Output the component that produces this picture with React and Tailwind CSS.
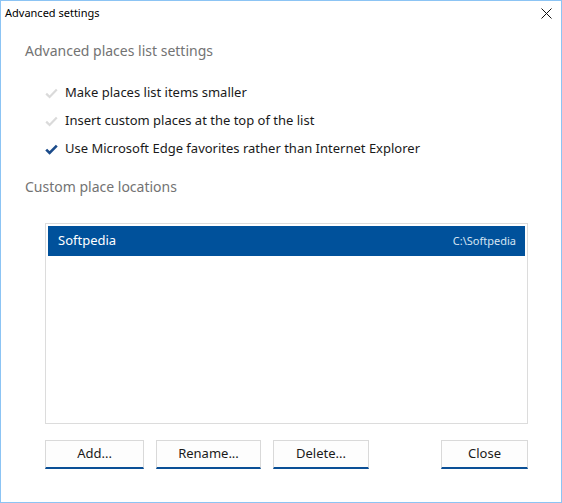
import React from 'react';

const font = { fontFamily: '"Segoe UI", "Noto Sans", "Liberation Sans", sans-serif' };

function Check({ on }) {
  return (
    <svg width="13" height="11" viewBox="0 0 13 11" className="shrink-0">
      <path
        d="M1.2 5.6 L4.6 9 L11.8 1.6"
        fill="none"
        stroke={on ? '#1b4b8a' : '#dadada'}
        strokeWidth={on ? 2.6 : 2.2}
        strokeLinejoin="miter"
      />
    </svg>
  );
}

const options = [
  { label: 'Make places list items smaller', on: false },
  { label: 'Insert custom places at the top of the list', on: false },
  { label: 'Use Microsoft Edge favorites rather than Internet Explorer', on: true },
];

function Btn({ children, w }) {
  return (
    <button
      className={`h-[29px] ${w} bg-[#fdfdfd] border border-[#d9d9d9] border-b-2 border-b-[#0a4f96] text-[13px] text-[#1a1a1a] flex items-center justify-center`}
    >
      {children}
    </button>
  );
}

export default function App() {
  return (
    <div style={font} className="w-[562px] h-[503px] bg-white border border-[#8cc4f4] flex flex-col">
      <div className="h-[24px] flex items-center justify-between pl-[4px] pr-[9px]">
        <span className="text-[11px] text-black">Advanced settings</span>
        <svg width="11" height="11" viewBox="0 0 11 11">
          <path d="M0.5 0.5 L10.5 10.5 M10.5 0.5 L0.5 10.5" stroke="#111" strokeWidth="1" />
        </svg>
      </div>

      <div className="pl-[24px] mt-[15px] text-[14px] leading-[22px] text-[#737373]">
        Advanced places list settings
      </div>

      <div className="mt-[17px] pl-[44px] flex flex-col">
        {options.map((o) => (
          <div key={o.label} className="h-[28px] flex items-center gap-[7px]">
            <Check on={o.on} />
            <span className="text-[13px] text-[#1a1a1a]">{o.label}</span>
          </div>
        ))}
      </div>

      <div className="pl-[24px] mt-[13px] text-[14px] leading-[22px] text-[#737373]">
        Custom place locations
      </div>

      <div className="ml-[44px] mt-[25px] w-[483px] h-[201px] border border-[#dcdcdc] p-[2px]">
        <div className="h-[30px] bg-[#00519b] flex items-center justify-between pl-[10px] pr-[9px]">
          <span className="text-[13px] text-white">Softpedia</span>
          <span className="text-[11px] text-[#d6e4f2]">C:\Softpedia</span>
        </div>
      </div>

      <div className="ml-[44px] mt-[16px] flex items-start">
        <Btn w="w-[99px]">Add...</Btn>
        <div className="ml-[12px]">
          <Btn w="w-[105px]">Rename...</Btn>
        </div>
        <div className="ml-[12px]">
          <Btn w="w-[96px]">Delete...</Btn>
        </div>
        <div className="ml-[72px]">
          <Btn w="w-[87px]">Close</Btn>
        </div>
      </div>
    </div>
  );
}
